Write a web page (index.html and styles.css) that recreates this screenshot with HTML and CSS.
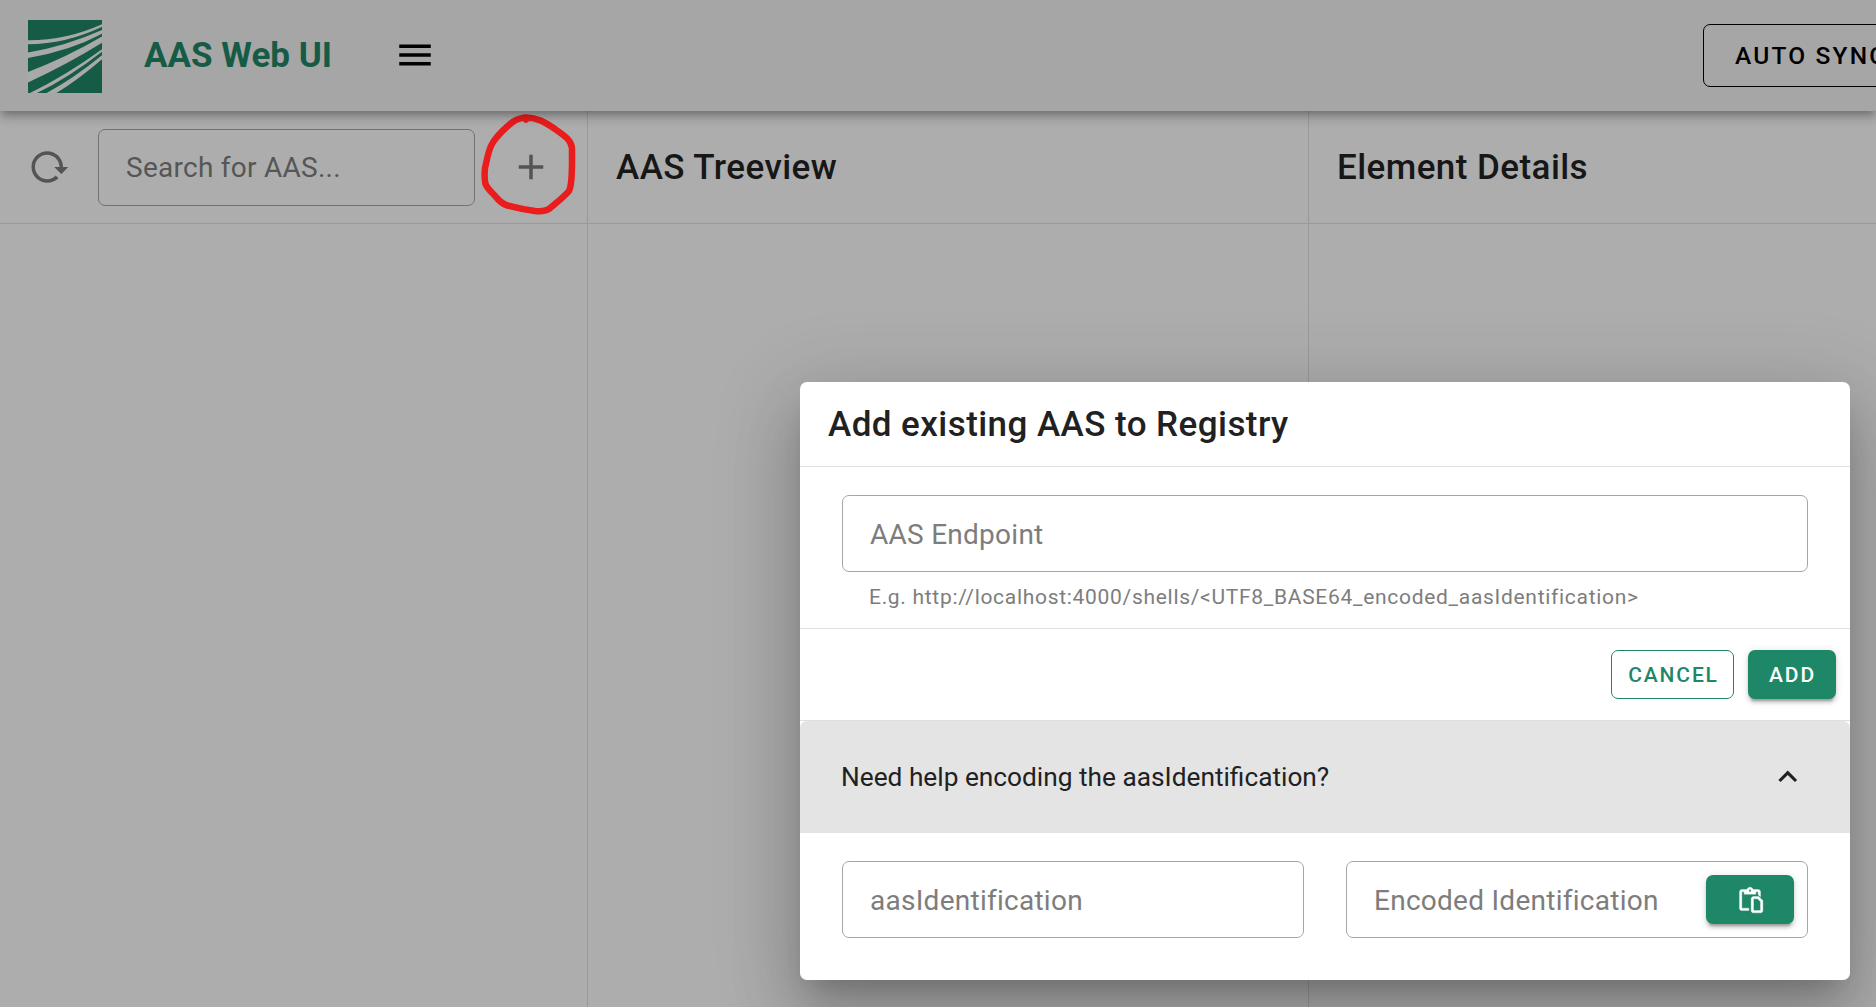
FILE: index.html
```html
<!DOCTYPE html>
<html lang="en">
<head>
<meta charset="utf-8">
<title>AAS Web UI</title>
<link rel="stylesheet" href="styles.css">
</head>
<body>
<div class="app">
  <header class="app-bar">
    <svg class="logo" viewBox="0 0 74 73">
      <rect width="74" height="73" fill="#165b46"/>
      <g fill="#a9a9a9">
        <path d="M0 20.300Q38 20.500 74 4.300V6.700Q38 24 0 24.200Z"/>
        <path d="M0 32.500Q38 26 74 10V13.800Q42 31 0 38Z"/>
        <path d="M0 52Q39 37 74 16.500V22.800Q40 44 0 62.500Z"/>
        <path d="M2 73Q38 55.500 74 29.300V31.700Q40 58 9 73Z"/>
        <path d="M18.500 73Q45 59 74 35.300V39.300Q50 60 28.500 73Z"/>
      </g>
    </svg>
    <h1 class="brand">AAS Web UI</h1>
    <svg class="icon menu" viewBox="0 0 24 24"><path d="M3,6H21V8H3V6M3,11H21V13H3V11M3,16H21V18H3V16Z"/></svg>
    <button class="sync">AUTO SYNC</button>
  </header>
  <main class="columns">
    <section class="column list">
      <div class="column-head">
        <svg class="icon reload" viewBox="0 0 24 24"><path d="M2 12C2 16.970 6.030 21 11 21C13.390 21 15.680 20.060 17.400 18.400L15.900 16.900C14.630 18.250 12.860 19 11 19C4.760 19 1.640 11.460 6.050 7.050C10.460 2.640 18 5.770 18 12H15L19 16H19.100L23 12H20C20 7.030 15.970 3 11 3C6.030 3 2 7.030 2 12Z"/></svg>
        <div class="field search">Search for AAS...</div>
        <div class="add-aas">
          <svg class="icon" viewBox="0 0 24 24"><path d="M19,13H13V19H11V13H5V11H11V5H13V11H19V13Z"/></svg>
          <svg class="marker" viewBox="480 110 100 110"><path d="M526 117.500C520 117.500 513 121 509 125C502 131 496 137 492 144C488 151 487 160 485 168Q484 178 485.500 184C488 190 493 193 496 197C499 201 501 203 506 205Q521 209 535 211Q544 212 549 209C556 203 564 197 569 191C572 185 571.500 176 572 166V148C571 139 563 135 555 129C546 123 537 117 525 117.500L526 119.500"/></svg>
        </div>
      </div>
    </section>
    <section class="column tree"><div class="column-head"><h2>AAS Treeview</h2></div></section>
    <section class="column details"><div class="column-head"><h2>Element Details</h2></div></section>
  </main>
</div>

<div class="dialog">
  <h2 class="dialog-title">Add existing AAS to Registry</h2>
  <div class="dialog-body">
    <div class="field">AAS Endpoint</div>
    <p class="hint">E.g. http://localhost:4000/shells/&lt;UTF8_BASE64_encoded_aasIdentification&gt;</p>
  </div>
  <div class="actions">
    <button class="btn outlined">CANCEL</button>
    <button class="btn filled">ADD</button>
  </div>
  <div class="panel-title">
    <span>Need help encoding the aasIdentification?</span>
    <svg class="chevron" viewBox="0 0 24 24"><path d="M7.410,15.410L12,10.830L16.590,15.410L18,14L12,8L6,14L7.410,15.410Z"/></svg>
  </div>
  <div class="panel-body">
    <div class="field">aasIdentification</div>
    <div class="field encoded"><span>Encoded Identification</span>
      <button class="btn filled copy" aria-label="Copy"><svg viewBox="0 0 24 24"><path fill-rule="evenodd" d="M5 21C3.900 21 3 20.100 3 19V5C3 3.900 3.900 3 5 3H9.180C9.600 1.840 10.700 1 12 1S14.400 1.840 14.820 3H19C20.100 3 21 3.900 21 5V9.200L19 7.600V5H17V7H7V5H5V19H11V21ZM12 3A1 1 0 1 0 12 5A1 1 0 1 0 12 3ZM15 9H19.500L23 12.500V21C23 22.100 22.100 23 21 23H15C13.900 23 13 22.100 13 21V11C13 9.900 13.900 9 15 9ZM15 11V21H21V13.500L18.500 11Z"/></svg></button>
    </div>
  </div>
</div>
</body>
</html>
```
FILE: styles.css
```css
* { box-sizing: border-box; }
body {
  margin: 0;
  height: 1007px;
  overflow: hidden;
  position: relative;
  background: #adadad;
  color: #171717;
  font-family: Roboto, "Liberation Sans", sans-serif;
}
h1, h2, p { margin: 0; }
button { font-family: inherit; }
.app { display: flex; flex-direction: column; height: 100%; }
.app-bar {
  position: relative;
  z-index: 1;
  display: flex;
  align-items: center;
  flex: none;
  height: 111px;
  padding-left: 28px;
  background: #a6a6a6;
  box-shadow: 0 3.5px 7px -1.75px rgba(0,0,0,.2), 0 7px 8.75px 0 rgba(0,0,0,.14), 0 1.75px 17.5px 0 rgba(0,0,0,.12);
}
.logo { width: 74px; height: 73px; margin-top: 2px; }
.brand {
  width: 251px;
  margin-left: 42px;
  font-size: 35px;
  font-weight: 700;
  line-height: 56px;
  white-space: nowrap;
  color: #165b46;
}
.icon { width: 42px; height: 42px; flex: none; }
.menu { margin: 0 0 1px -1px; fill: #000; }
.sync {
  flex: none;
  width: 260px;
  height: 63px;
  margin-left: auto;
  margin-right: -87px;
  padding: 0 0 0 31px;
  border: 1px solid #000;
  border-radius: 7px;
  background: none;
  color: #000;
  font-size: 24.500px;
  font-weight: 500;
  letter-spacing: .0892857em;
  text-align: left;
}
.columns { flex: 1; display: grid; grid-template-columns: 588px 721px 1fr; }
.column + .column .column-head { padding-left: 28px; }
.list, .tree { border-right: 1px solid #999; }
.column-head {
  display: flex;
  align-items: center;
  height: 113px;
  border-bottom: 1px solid #999;
}
.column h2, .dialog-title {
  font-size: 35px;
  font-weight: 500;
  line-height: 56px;
  letter-spacing: .0125em;
}
.column h2 { padding-top: 2px; }
.reload { margin-left: 28px; fill: #545454; }
.field {
  display: flex;
  align-items: center;
  height: 77px;
  padding: 2px 0 0 27px;
  border: 1px solid #a6a6a6;
  border-radius: 7px;
  color: #7d7d7d;
  font-size: 28px;
  letter-spacing: .009375em;
  white-space: nowrap;
}
.search { width: 377px; margin-left: 28px; padding-top: 0; border-color: #727272; color: #565656; }
.add-aas { position: relative; display: flex; margin-left: 35px; fill: #545454; }
.marker {
  position: absolute;
  left: -30px;
  top: -36px;
  width: 100px;
  height: 110px;
  fill: none;
  stroke: #ea1c1c;
  stroke-width: 6.500px;
  stroke-linecap: round;
  stroke-linejoin: round;
}
.dialog {
  position: absolute;
  z-index: 2;
  left: 800px;
  top: 382px;
  width: 1050px;
  height: 598px;
  border-radius: 7px;
  background: #fff;
  color: #212121;
  box-shadow: 0 19.25px 26.25px -12.25px rgba(0,0,0,.2), 0 42px 66.500px 5.250px rgba(0,0,0,.14), 0 15.750px 80.500px 14px rgba(0,0,0,.12);
}
.dialog-title { height: 85px; padding: 15px 28px 13px; border-bottom: 1px solid #e1e1e1; }
.dialog-body { height: 162px; padding: 28px 42px 0; border-bottom: 1px solid #e1e1e1; }
.hint {
  padding: 11px 27px 0;
  color: #7d7d7d;
  font-size: 21px;
  line-height: 28px;
  letter-spacing: .0333333em;
  white-space: nowrap;
}
.actions {
  display: flex;
  justify-content: flex-end;
  gap: 14px;
  height: 92px;
  padding: 21px 14px 0;
  border-bottom: 1px solid #dedede;
}
.btn {
  height: 49px;
  padding: 0;
  border: 0;
  border-radius: 7px;
  font-size: 21px;
  font-weight: 500;
  letter-spacing: .0892857em;
}
.outlined { width: 123px; padding-left: 2px; border: 1px solid #1e8767; background: none; color: #1e8767; }
.filled {
  width: 88px;
  padding-left: 1px;
  background: #1e8767;
  color: #fff;
  box-shadow: 0 5.250px 1.750px -3.500px rgba(0,0,0,.2), 0 3.500px 3.500px 0 rgba(0,0,0,.14), 0 1.750px 8.750px 0 rgba(0,0,0,.12);
}
.panel-title {
  display: flex;
  align-items: center;
  justify-content: space-between;
  height: 112px;
  padding: 0 44px 0 41px;
  border-radius: 7px 7px 0 0;
  background: #e4e4e4;
  font-size: 26.250px;
}
.chevron { width: 37.500px; height: 37.500px; margin-bottom: 1px; fill: #212121; }
.panel-body { display: grid; grid-template-columns: 1fr 1fr; gap: 42px; padding: 28px 42px 42px; }
.encoded { justify-content: space-between; padding-right: 13px; }
.copy { display: flex; align-items: center; justify-content: center; margin-top: -2px; padding: 0; }
.copy svg { width: 28px; height: 28px; fill: #fff; stroke: #fff; stroke-width: .3px; }
```
